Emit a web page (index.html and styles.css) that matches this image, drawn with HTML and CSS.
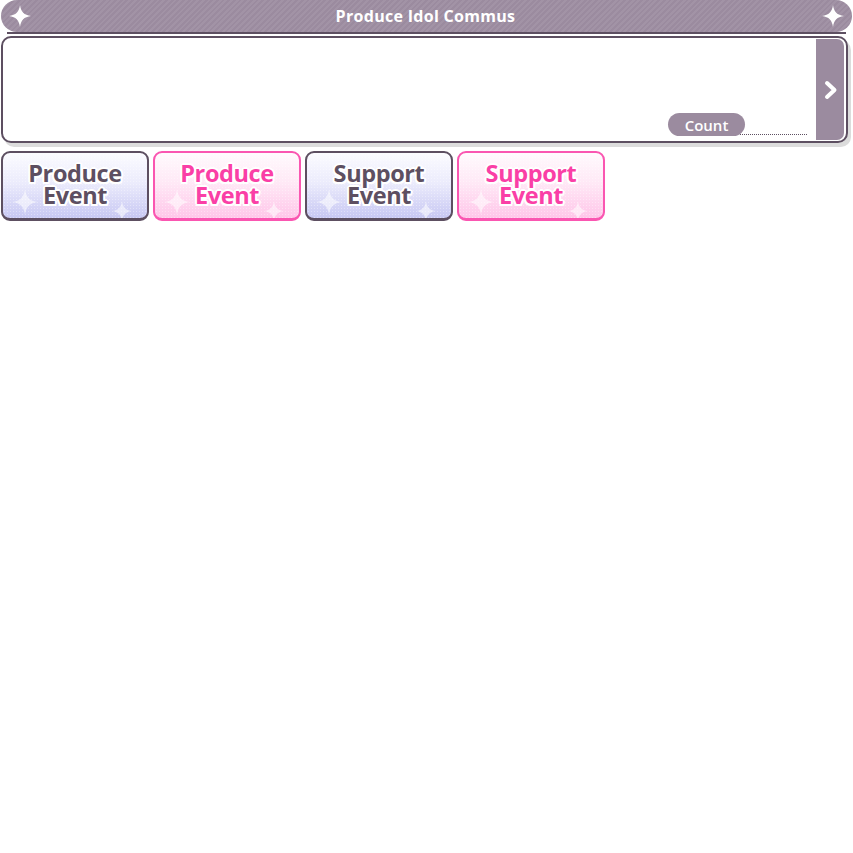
FILE: index.html
```html
<!DOCTYPE html>
<html lang="en">
<head>
<meta charset="utf-8">
<title>Produce Idol Commus</title>
<link rel="stylesheet" href="styles.css">
</head>
<body>
<div class="app">
  <header class="titlebar">
    <svg class="spark" viewBox="0 0 24 24"><path d="M12 1 C13 8 16 11 23 12 C16 13 13 16 12 23 C11 16 8 13 1 12 C8 11 11 8 12 1Z" fill="#fff"/></svg>
    <h1 class="title">Produce Idol Commus</h1>
    <svg class="spark" viewBox="0 0 24 24"><path d="M12 1 C13 8 16 11 23 12 C16 13 13 16 12 23 C11 16 8 13 1 12 C8 11 11 8 12 1Z" fill="#fff"/></svg>
  </header>
  <div class="titlebar-line"></div>

  <section class="panel">
    <div class="panel-body">
      <div class="count-row">
        <span class="pill">Count</span>
        <span class="dots"></span>
      </div>
    </div>
    <button class="next" aria-label="Next">
      <svg viewBox="0 0 16 20" width="16" height="20"><path d="M4 3 L11.5 10 L4 17" fill="none" stroke="#fff" stroke-width="4" stroke-linecap="round" stroke-linejoin="round"/></svg>
    </button>
  </section>

  <nav class="tabs">
    <button class="tab tab-dark"><span class="tab-text"><span class="ln">Produce</span><span class="ln">Event</span></span>
      <svg class="deco deco-l" viewBox="0 0 24 24"><path d="M12 1 C13 8 16 11 23 12 C16 13 13 16 12 23 C11 16 8 13 1 12 C8 11 11 8 12 1Z"/></svg>
      <svg class="deco deco-r" viewBox="0 0 24 24"><path d="M12 1 C13 8 16 11 23 12 C16 13 13 16 12 23 C11 16 8 13 1 12 C8 11 11 8 12 1Z"/></svg>
    </button>
    <button class="tab tab-pink"><span class="tab-text"><span class="ln">Produce</span><span class="ln">Event</span></span>
      <svg class="deco deco-l" viewBox="0 0 24 24"><path d="M12 1 C13 8 16 11 23 12 C16 13 13 16 12 23 C11 16 8 13 1 12 C8 11 11 8 12 1Z"/></svg>
      <svg class="deco deco-r" viewBox="0 0 24 24"><path d="M12 1 C13 8 16 11 23 12 C16 13 13 16 12 23 C11 16 8 13 1 12 C8 11 11 8 12 1Z"/></svg>
    </button>
    <button class="tab tab-dark"><span class="tab-text"><span class="ln">Support</span><span class="ln">Event</span></span>
      <svg class="deco deco-l" viewBox="0 0 24 24"><path d="M12 1 C13 8 16 11 23 12 C16 13 13 16 12 23 C11 16 8 13 1 12 C8 11 11 8 12 1Z"/></svg>
      <svg class="deco deco-r" viewBox="0 0 24 24"><path d="M12 1 C13 8 16 11 23 12 C16 13 13 16 12 23 C11 16 8 13 1 12 C8 11 11 8 12 1Z"/></svg>
    </button>
    <button class="tab tab-pink"><span class="tab-text"><span class="ln">Support</span><span class="ln">Event</span></span>
      <svg class="deco deco-l" viewBox="0 0 24 24"><path d="M12 1 C13 8 16 11 23 12 C16 13 13 16 12 23 C11 16 8 13 1 12 C8 11 11 8 12 1Z"/></svg>
      <svg class="deco deco-r" viewBox="0 0 24 24"><path d="M12 1 C13 8 16 11 23 12 C16 13 13 16 12 23 C11 16 8 13 1 12 C8 11 11 8 12 1Z"/></svg>
    </button>
  </nav>
</div>
</body>
</html>
```

FILE: styles.css
```css
* { box-sizing: border-box; }
html, body { margin: 0; padding: 0; background: #fff; }
body { font-family: "Open Sans", "Noto Sans", sans-serif; color: #5d4f61; }

.app { width: 853px; display: flex; flex-direction: column; }

.titlebar {
  height: 32px;
  margin: 0 1px 0 1px;
  border-radius: 16px;
  background-color: #9b8b9f;
  background-image: repeating-linear-gradient(-45deg, rgba(255,255,255,0.07) 0 2px, rgba(0,0,0,0) 2px 4px);
  display: flex;
  align-items: center;
  justify-content: space-between;
  padding: 0 7px 0 7px;
}
.spark { width: 24px; height: 24px; display: block; }
.title {
  margin: 0 0 0 -2px;
  font-size: 16px;
  font-weight: 700;
  color: #fff;
  letter-spacing: 0.3px;
}
.titlebar-line {
  height: 2px;
  margin: 0 7px 0 7px;
  background: #5d4f61;
}

.panel {
  margin: 2px 5px 0 1px;
  height: 107px;
  border: 2px solid #5d4f61;
  border-radius: 10px;
  box-shadow: 3px 4px 0 #dcdcdc;
  background: #fff;
  display: flex;
  padding: 0 2px 0 0;
}
.panel-body {
  flex: 1;
  display: flex;
  align-items: flex-end;
  justify-content: flex-end;
  padding: 0 9px 4px 0;
}
.count-row { display: flex; align-items: flex-end; }
.pill {
  position: relative;
  z-index: 1;
  width: 77px;
  height: 23px;
  border-radius: 12px;
  background: #9b8b9f;
  color: #fff;
  font-size: 15px;
  font-weight: 600;
  display: flex;
  align-items: center;
  justify-content: center;
  margin-bottom: 1px;
}
.dots {
  width: 67px;
  margin-left: -5px;
  border-bottom: 1px dotted #5d4f61;
  margin-bottom: 2px;
}
.next {
  width: 28px;
  margin: 1px 0 1px 0;
  border: 0;
  padding: 0;
  background: #9b8b9f;
  border-radius: 0 7px 7px 0;
  display: flex;
  align-items: center;
  justify-content: center;
}
.next svg { display: block; margin-left: 1px; }

.tabs {
  display: flex;
  gap: 4px;
  margin: 8px 0 0 1px;
}
.tab {
  position: relative;
  width: 148px;
  height: 70px;
  border: 2px solid #5d4f61;
  border-bottom-width: 3px;
  border-radius: 9px;
  padding: 0 0 3px 0;
  display: flex;
  align-items: center;
  justify-content: center;
  overflow: hidden;
  font-family: "Open Sans", "Noto Sans", sans-serif;
}
.tab-dark {
  border-color: #5d4f61;
  background-color: #e6e6fb;
  background-image:
    radial-gradient(rgba(255,255,255,0.35) 0.6px, transparent 0.8px),
    linear-gradient(to bottom, #fbfbff 0%, #ececfc 45%, #c8c8f3 100%);
  background-size: 3px 3px, 100% 100%;
  color: #5d4f61;
}
.tab-pink {
  border-color: #fa56b1;
  background-color: #ffe4f4;
  background-image:
    radial-gradient(rgba(255,255,255,0.35) 0.6px, transparent 0.8px),
    linear-gradient(to bottom, #fffafd 0%, #ffe9f6 45%, #ffc6e9 100%);
  background-size: 3px 3px, 100% 100%;
  color: #fa3fa6;
}
.tab-text {
  position: relative;
  z-index: 1;
  display: flex;
  flex-direction: column;
  align-items: center;
  font-size: 23.5px;
  font-weight: 700;
  text-align: center;
  letter-spacing: -0.4px;
  text-shadow:
    2px 0 0 #fff, -2px 0 0 #fff, 0 2px 0 #fff, 0 -2px 0 #fff,
    1.5px 1.5px 0 #fff, -1.5px 1.5px 0 #fff, 1.5px -1.5px 0 #fff, -1.5px -1.5px 0 #fff;
}
.ln { display: block; line-height: 22px; height: 22px; }
.deco {
  position: absolute;
  fill: rgba(255,255,255,0.55);
}
.deco-l { width: 28px; height: 28px; left: 8px; bottom: 2px; }
.deco-r { width: 22px; height: 22px; right: 14px; bottom: -4px; }
```
